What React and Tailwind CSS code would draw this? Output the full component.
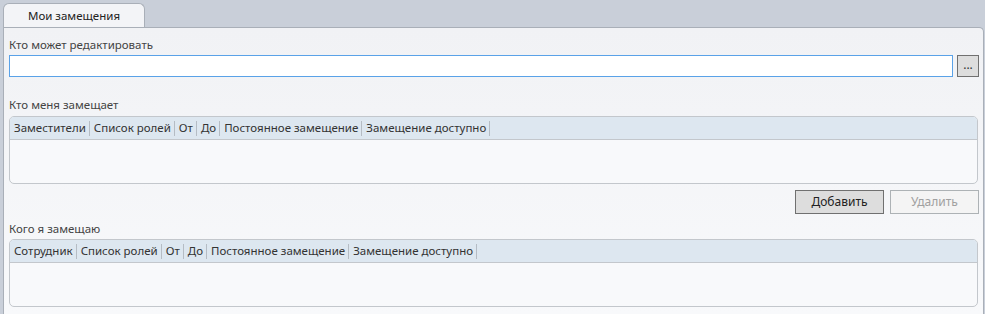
import React from "react";

const font = { fontFamily: '"Noto Sans", "Open Sans", sans-serif' };

function Grid({ cols }) {
  return (
    <div className="mr-[1px] h-[68px] rounded-[5px] border border-[#c3c7cc] bg-[#f8f9fb] overflow-hidden flex flex-col">
      <div className="h-[23px] shrink-0 bg-[#dde7f0] border-b border-[#c3c7cc] flex items-center">
        {cols.map((c) => (
          <div key={c} className="flex items-center pl-[4px]">
            <span className="text-[11.5px] leading-[16px] text-[#333] whitespace-nowrap">{c}</span>
            <span className="ml-[3px] w-px h-[15px] bg-[#b5bcc4]" />
          </div>
        ))}
      </div>
      <div className="flex-1" />
    </div>
  );
}

export default function App() {
  return (
    <div style={font} className="w-[985px] h-[314px] bg-[#c9cfd9] flex flex-col overflow-hidden">
      <div className="h-[27px] shrink-0 pl-[3px] flex items-end">
        <div className="w-[142px] h-[24px] bg-[#f3f4f7] border border-b-0 border-[#a9afb8] rounded-t-[6px] flex items-center justify-center">
          <span className="text-[11.5px] leading-[16px] text-[#222]">Мои замещения</span>
        </div>
      </div>
      <div className="flex-1 ml-[3px] mr-[1px] border-l border-r border-t border-[#a9afb8] rounded-tr-[5px] bg-gradient-to-b from-[#f1f2f5] to-[#f8f9fb] pl-[5px] pr-[4px] pt-[9px] flex flex-col">
        <div className="text-[11.5px] leading-[16px] text-[#444]">Кто может редактировать</div>
        <div className="mt-[2px] flex gap-[4px]">
          <div className="flex-1 h-[22px] bg-white border border-[#5aa2e8]" />
          <div className="w-[22px] h-[22px] bg-[#dddddd] border border-[#707070] flex items-center justify-center">
            <span className="text-[12px] leading-[12px] text-[#333] -mt-[2px]">...</span>
          </div>
        </div>
        <div className="mt-[20px] text-[11.5px] leading-[16px] text-[#444]">Кто меня замещает</div>
        <div className="mt-[3px]">
          <Grid cols={["Заместители", "Список ролей", "От", "До", "Постоянное замещение", "Замещение доступно"]} />
        </div>
        <div className="mt-[6px] flex justify-end gap-[6px]">
          <div className="w-[89px] h-[24px] bg-[#dddddd] border border-[#707070] flex items-center justify-center text-[12px] text-[#222]">Добавить</div>
          <div className="w-[89px] h-[24px] bg-[#f4f4f4] border border-[#adb2b5] flex items-center justify-center text-[12px] text-[#a0a0a0]">Удалить</div>
        </div>
        <div className="mt-[7px] text-[11.5px] leading-[16px] text-[#444]">Кого я замещаю</div>
        <div className="mt-[2px]">
          <Grid cols={["Сотрудник", "Список ролей", "От", "До", "Постоянное замещение", "Замещение доступно"]} />
        </div>
      </div>
    </div>
  );
}
